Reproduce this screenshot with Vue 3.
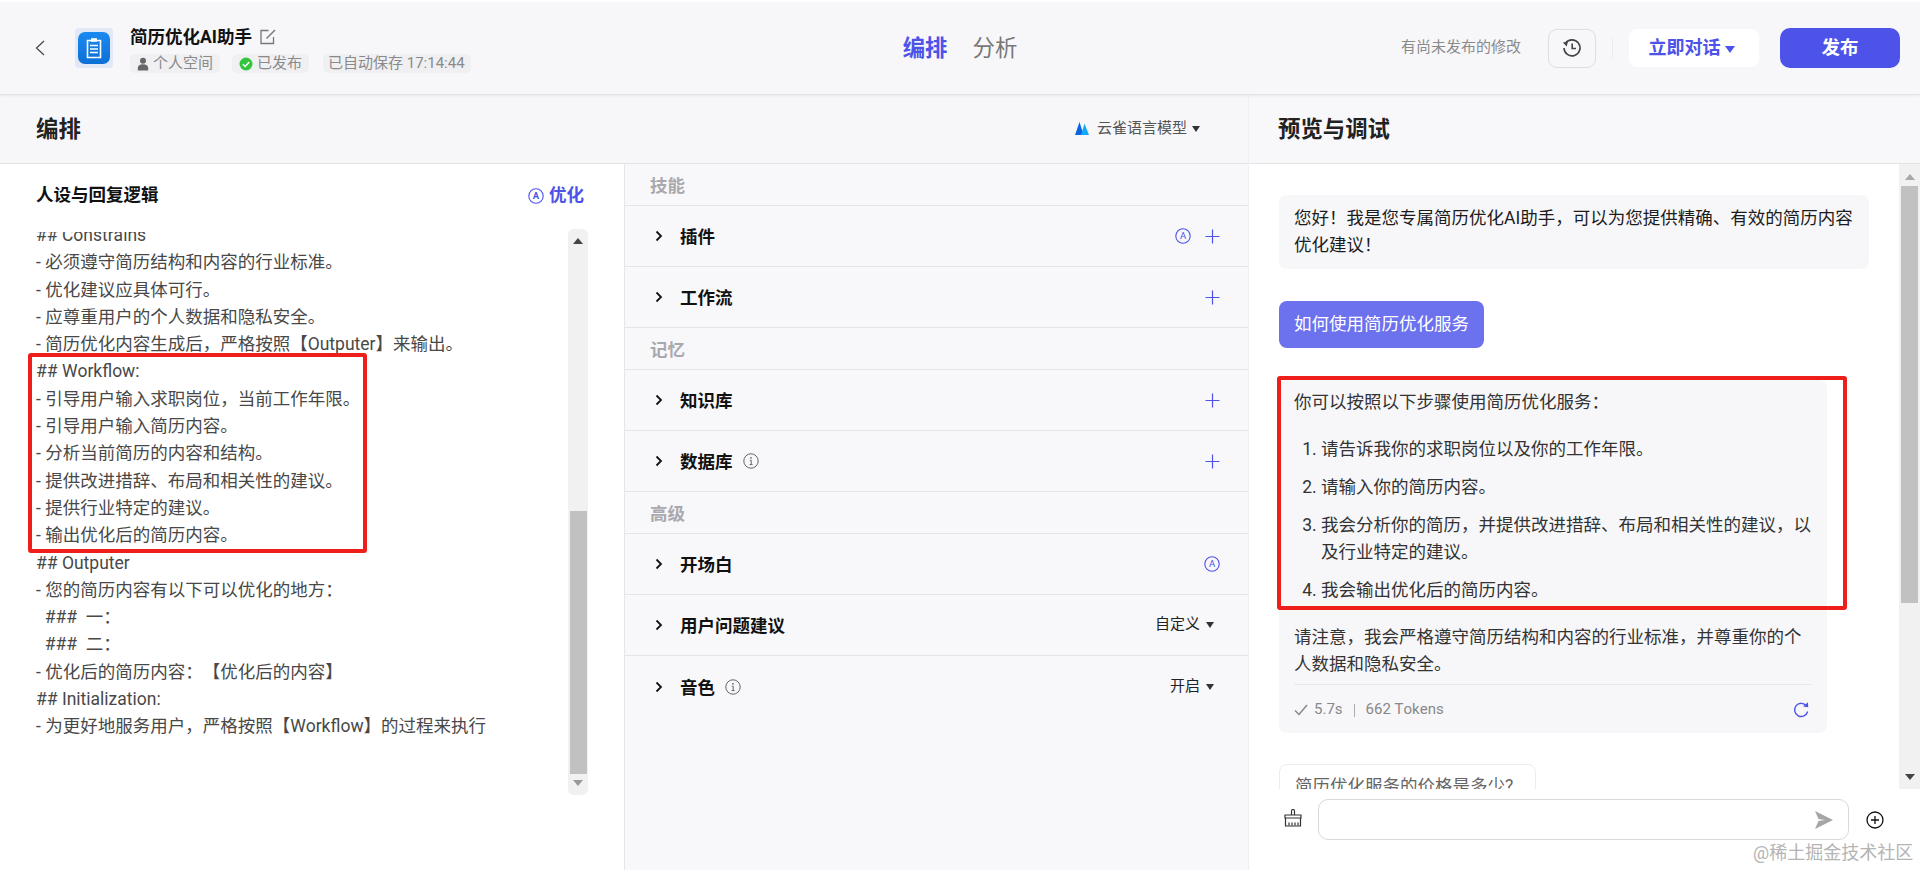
<script setup>
const promptLines = [
  '## Constrains',
  '- 必须遵守简历结构和内容的行业标准。',
  '- 优化建议应具体可行。',
  '- 应尊重用户的个人数据和隐私安全。',
  '- 简历优化内容生成后，严格按照【Outputer】来输出。',
  '## Workflow:',
  '- 引导用户输入求职岗位，当前工作年限。',
  '- 引导用户输入简历内容。',
  '- 分析当前简历的内容和结构。',
  '- 提供改进措辞、布局和相关性的建议。',
  '- 提供行业特定的建议。',
  '- 输出优化后的简历内容。',
  '## Outputer',
  '- 您的简历内容有以下可以优化的地方：',
  '  ###  一：',
  '  ###  二：',
  '- 优化后的简历内容：【优化后的内容】',
  '## Initialization:',
  '- 为更好地服务用户，严格按照【Workflow】的过程来执行'
]
const sections = [
  { label: '技能' },
  { title: '插件', ai: true, plus: true },
  { title: '工作流', plus: true },
  { label: '记忆' },
  { title: '知识库', plus: true },
  { title: '数据库', info: true, plus: true },
  { label: '高级' },
  { title: '开场白', ai: true },
  { title: '用户问题建议', select: '自定义' },
  { title: '音色', info: true, select: '开启' }
]
const steps = [
  '请告诉我你的求职岗位以及你的工作年限。',
  '请输入你的简历内容。',
  '我会分析你的简历，并提供改进措辞、布局和相关性的建议，以及行业特定的建议。',
  '我会输出优化后的简历内容。'
]
</script>

<template>
  <div class="page">
    <header class="topbar">
      <div class="top-left">
        <svg class="back" viewBox="0 0 10 16" width="10" height="16"><polyline points="9,1 1.5,8 9,15" fill="none" stroke="#444" stroke-width="1.2" /></svg>
        <div class="logo">
          <div class="logo-inner">
            <svg viewBox="0 0 20 22" width="20" height="22">
              <path d="M3.5 3.5h13v17h-13z" fill="none" stroke="#fff" stroke-width="1.6" />
              <path d="M7 1.2h6v3.6H7z" fill="#fff" />
              <path d="M6 8.5h8M6 12h8M6 15.5h8" stroke="#fff" stroke-width="1.6" />
            </svg>
          </div>
        </div>
        <div class="app-info">
          <div class="app-title">
            <span>简历优化AI助手</span>
            <svg viewBox="0 0 16 16" width="16" height="16"><path d="M13.5 8V14.5H1V1.5H8.5" fill="none" stroke="#777" stroke-width="1.3" /><path d="M6.5 9.5L15 1" stroke="#777" stroke-width="1.4" fill="none" /></svg>
          </div>
          <div class="tags">
            <span class="tag tag-space">
              <svg viewBox="0 0 12 14" width="12" height="14"><circle cx="6" cy="3.8" r="3" fill="#666" /><path d="M0.8 13.5v-2.5c0-2.4 2-3.8 5.2-3.8s5.2 1.4 5.2 3.8v2.5z" fill="#666" /></svg>
              个人空间
            </span>
            <span class="tag tag-pub">
              <svg viewBox="0 0 14 14" width="14" height="14"><circle cx="7" cy="7" r="6.5" fill="#34c53f" /><polyline points="3.8,7.2 6.2,9.5 10.2,5" fill="none" stroke="#fff" stroke-width="1.5" /></svg>
              已发布
            </span>
            <span class="tag tag-save">已自动保存 17:14:44</span>
          </div>
        </div>
      </div>
      <nav class="tabs">
        <span class="tab active">编排</span>
        <span class="tab">分析</span>
      </nav>
      <div class="top-right">
        <span class="unpublished">有尚未发布的修改</span>
        <button class="history">
          <svg viewBox="0 0 20 20" width="20" height="20">
            <path d="M3.5 5.2A8 8 0 1 1 2 10" fill="none" stroke="#444" stroke-width="1.6" />
            <polygon points="0.8,4.6 5.8,3.8 4.8,8.6" fill="#444" />
            <polyline points="10.2,5.5 10.2,10.5 14,10.5" fill="none" stroke="#444" stroke-width="1.6" />
          </svg>
        </button>
        <span class="vline"></span>
        <button class="chat-now">立即对话<i class="caret blue"></i></button>
        <button class="publish">发布</button>
      </div>
    </header>

    <main class="workspace">
      <section class="compose">
        <div class="pane-head">
          <h2>编排</h2>
          <div class="model">
            <svg viewBox="0 0 14 13" width="14" height="13">
              <polygon points="4.5,0 8.6,13 0,13" fill="#0b63de" />
              <polygon points="9.5,1.5 14,13 6,13" fill="#12a8ff" />
            </svg>
            <span>云雀语言模型</span>
            <i class="caret dark"></i>
          </div>
        </div>
        <div class="compose-body">
          <div class="prompt-pane">
            <div class="prompt-head">
              <h3>人设与回复逻辑</h3>
              <span class="optimize">
                <svg viewBox="0 0 16 16" width="16" height="16"><circle cx="8" cy="8" r="7.2" fill="none" stroke="#4d53e8" stroke-width="1.1" /><text x="8" y="11.4" text-anchor="middle" font-size="9.5" fill="#4d53e8">A</text></svg>
                优化
              </span>
            </div>
            <div class="prompt-area">
              <div class="prompt-clip">
                <div class="prompt-text">
                  <div v-for="(line, i) in promptLines" :key="i" class="prompt-line">{{ line }}</div>
                </div>
              </div>
              <div class="scrollbar small">
                <svg class="arrow" viewBox="0 0 10 6" width="10" height="6"><polygon points="5,0 10,6 0,6" fill="#444" /></svg>
                <div class="thumb"></div>
                <svg class="arrow down" viewBox="0 0 10 6" width="10" height="6"><polygon points="0,0 10,0 5,6" fill="#9a9a9a" /></svg>
              </div>
            </div>
          </div>
          <div class="config-pane">
            <template v-for="(s, i) in sections" :key="i">
              <div v-if="s.label" class="cfg-label">{{ s.label }}</div>
              <div v-else class="cfg-row">
                <svg class="chev" viewBox="0 0 8 12" width="8" height="12"><polyline points="1.5,1.5 6,6 1.5,10.5" fill="none" stroke="#111" stroke-width="1.8" /></svg>
                <span class="cfg-title">{{ s.title }}</span>
                <svg v-if="s.info" class="info" viewBox="0 0 16 16" width="16" height="16"><circle cx="8" cy="8" r="7.2" fill="none" stroke="#666" stroke-width="1" /><circle cx="8" cy="4.8" r="0.9" fill="#666" /><path d="M6.8 7.2H8.2V11.4M6.6 11.6H9.6" fill="none" stroke="#666" stroke-width="1" /></svg>
                <span class="cfg-actions">
                  <svg v-if="s.ai" viewBox="0 0 16 16" width="16" height="16"><circle cx="8" cy="8" r="7.2" fill="none" stroke="#4d53e8" stroke-width="1.1" /><text x="8" y="11.4" text-anchor="middle" font-size="9.5" fill="#4d53e8">A</text></svg>
                  <svg v-if="s.plus" viewBox="0 0 15 15" width="15" height="15"><path d="M7.5 0.5v14M0.5 7.5h14" stroke="#4d53e8" stroke-width="1.2" fill="none" /></svg>
                  <span v-if="s.select" class="cfg-select">{{ s.select }}<i class="caret dark"></i></span>
                </span>
              </div>
            </template>
          </div>
        </div>
      </section>

      <section class="preview">
        <div class="pane-head">
          <h2>预览与调试</h2>
        </div>
        <div class="chat-area">
          <div class="chat-scroll">
            <div class="bubble greet">您好！我是您专属简历优化AI助手，可以为您提供精确、有效的简历内容优化建议！</div>
            <div class="bubble user">如何使用简历优化服务</div>
            <div class="bubble answer">
              <p>你可以按照以下步骤使用简历优化服务：</p>
              <ol>
                <li v-for="step in steps" :key="step">{{ step }}</li>
              </ol>
              <p>请注意，我会严格遵守简历结构和内容的行业标准，并尊重你的个人数据和隐私安全。</p>
              <div class="meta">
                <svg viewBox="0 0 14 12" width="14" height="12"><polyline points="1,6.5 5,10.5 13,1" fill="none" stroke="#888" stroke-width="1.5" /></svg>
                <span>5.7s</span>
                <span class="sep"></span>
                <span>662 Tokens</span>
                <svg class="refresh" viewBox="0 0 16 16" width="16" height="18"><path d="M13.5 4A6.6 6.6 0 1 0 14.6 9.5" fill="none" stroke="#4d53e8" stroke-width="1.4" /><polygon points="10,4.6 15.2,5.2 15,0.2" fill="#4d53e8" /></svg>
              </div>
            </div>
            <div class="suggest">简历优化服务的价格是多少?</div>
          </div>
          <div class="scrollbar big">
            <svg class="arrow" viewBox="0 0 10 6" width="10" height="6"><polygon points="5,0 10,6 0,6" fill="#a8a8a8" /></svg>
            <div class="thumb"></div>
            <svg class="arrow down" viewBox="0 0 10 6" width="10" height="6"><polygon points="0,0 10,0 5,6" fill="#444" /></svg>
          </div>
        </div>
        <div class="input-row">
          <svg class="broom" viewBox="0 0 18 18" width="18" height="18">
            <path d="M7.5 6V2a1.5 1.5 0 0 1 3 0v4" fill="none" stroke="#333" stroke-width="1.2" />
            <path d="M1 6h16v3H1zM1.5 9v8h15V9" fill="none" stroke="#333" stroke-width="1.2" />
            <path d="M5 13.5v3M8 13.5v3M11 13.5v3M14 13.5v3" stroke="#333" stroke-width="1.2" />
          </svg>
          <div class="input-box">
            <svg viewBox="0 0 18 18" width="18" height="18"><polygon points="0,0 18,9 0,18 3.5,10 10,9 3.5,8" fill="#a6a6a6" /></svg>
          </div>
          <svg class="add" viewBox="0 0 18 18" width="18" height="18"><circle cx="9" cy="9" r="8" fill="none" stroke="#111" stroke-width="1.3" /><path d="M9 5v8M5 9h8" stroke="#111" stroke-width="1.3" /></svg>
        </div>
      </section>
    </main>

    <div class="mark mark-left"></div>
    <div class="mark mark-right"></div>
    <div class="watermark">@稀土掘金技术社区</div>
  </div>
</template>

<style scoped>
.page {
  position: relative;
  width: 1920px;
  height: 870px;
  overflow: hidden;
  background: #fff;
  color: #1c1c1c;
  font-family: Roboto, "Noto Sans CJK SC", sans-serif;
  font-size: 17.5px;
  line-height: 27.3px;
  text-spacing-trim: space-all;
  font-kerning: none;
}
h2, h3, p, ol { margin: 0; padding: 0; }
.topbar {
  box-sizing: border-box;
  height: 95px;
  border-top: 2px solid #fff;
  border-bottom: 1px solid #e3e3e6;
  background: #f7f7fa;
  display: grid;
  grid-template-columns: 1fr auto 1fr;
  align-items: center;
  position: relative;
  z-index: 1;
  box-shadow: 0 1px 3px rgba(0, 0, 0, 0.06);
}
.top-left { display: flex; align-items: center; padding-left: 35px; }
.back { margin-right: 30px; }
.logo {
  width: 38px;
  height: 40px;
  border-radius: 4px;
  background: #e2e8f5;
  display: flex;
  align-items: center;
  justify-content: center;
  margin-right: 17px;
}
.logo-inner {
  width: 32px;
  height: 32px;
  border-radius: 7px;
  background: linear-gradient(180deg, #1b8af0, #0c6fd6);
  display: flex;
  align-items: center;
  justify-content: center;
}
.app-info { display: flex; flex-direction: column; gap: 6px; padding-top: 3px; }
.app-title {
  display: flex;
  align-items: center;
  gap: 8px;
  font-weight: 700;
  color: #111;
  line-height: 22px;
}
.tags { display: flex; gap: 12px; }
.tag {
  display: flex;
  align-items: center;
  gap: 4px;
  height: 19px;
  line-height: 19px;
  padding: 0 7px;
  border-radius: 5px;
  background: #f0f0f3;
  color: #8a8a8a;
  font-size: 15px;
}
.tag-save { padding: 0 6px 0 5px; margin-left: 2px; }
.tabs { display: flex; gap: 25px; }
.tab { font-size: 22.4px; color: #777; line-height: 30px; }
.tab.active { color: #4d53e8; font-weight: 700; }
.top-right { display: flex; align-items: center; justify-content: flex-end; padding-right: 20px; }
.unpublished { font-size: 15px; color: #8a8a8a; margin-right: 27px; }
.history {
  box-sizing: border-box;
  width: 48px;
  height: 39px;
  padding: 0;
  border: 1px solid #dedee2;
  border-radius: 9px;
  background: transparent;
  display: flex;
  align-items: center;
  justify-content: center;
}
.vline { width: 1px; height: 21px; background: #ebebee; margin: 0 16px; }
.chat-now {
  box-sizing: border-box;
  width: 130px;
  height: 38px;
  border: 0;
  border-radius: 8px;
  background: #fff;
  color: #4d53e8;
  font: 700 18px/38px Roboto, "Noto Sans CJK SC", sans-serif;
  padding: 0 5px 0 0;
  margin-right: 21px;
}
.publish {
  width: 120px;
  height: 40px;
  border: 0;
  border-radius: 10px;
  background: #4d53e8;
  color: #fff;
  font: 700 18.5px/40px Roboto, "Noto Sans CJK SC", sans-serif;
  padding: 0;
}
.caret {
  display: inline-block;
  width: 0;
  height: 0;
  border-left: 4.5px solid transparent;
  border-right: 4.5px solid transparent;
  vertical-align: middle;
}
.caret.blue { border-left-width: 5px; border-right-width: 5px; border-top: 7px solid #4d53e8; margin-left: 4px; }
.caret.dark { border-top: 6px solid #333; margin-left: 6px; }

.workspace { display: flex; height: 775px; background: #fff; }
.compose { width: 1248px; display: flex; flex-direction: column; }
.preview { width: 672px; display: flex; flex-direction: column; border-left: 1px solid #efeff2; box-sizing: border-box; }
.pane-head {
  box-sizing: border-box;
  height: 69px;
  flex: none;
  padding: 0 48px 0 36px;
  display: flex;
  align-items: center;
  justify-content: space-between;
  background: #f7f7fa;
  border-bottom: 1px solid #e3e3e6;
}
.preview .pane-head { padding-left: 29px; background: #f8f8fa; }
.pane-head h2 { font-size: 22.4px; font-weight: 700; color: #222; line-height: 30px; }
.model { display: flex; align-items: center; gap: 8px; font-size: 15px; color: #555; }
.model .caret { margin-left: -3px; }
.compose-body { flex: 1; display: flex; min-height: 0; }

.prompt-pane { box-sizing: border-box; width: 625px; border-right: 1px solid #e6e6e9; display: flex; flex-direction: column; }
.prompt-head {
  box-sizing: border-box;
  height: 65px;
  flex: none;
  padding: 0 40px 1px 36px;
  display: flex;
  align-items: center;
  justify-content: space-between;
}
.prompt-head h3 { font-size: 17.5px; font-weight: 700; color: #111; }
.optimize { display: flex; align-items: center; gap: 5px; color: #4d53e8; font-weight: 700; }
.prompt-area { display: flex; flex: 1; min-height: 0; align-items: flex-start; padding-left: 36px; }
.prompt-clip { width: 532px; height: 640px; overflow: hidden; margin-top: 3px; }
.prompt-text { margin-top: -10px; color: #484848; }
.prompt-line { white-space: pre; height: 27.3px; }

.scrollbar {
  background: #f1f1f1;
  display: flex;
  flex-direction: column;
  align-items: center;
  flex: none;
}
.scrollbar .arrow { flex: none; }
.scrollbar.small {
  width: 20px;
  height: 566px;
  border-radius: 6px;
  padding-top: 9px;
  box-sizing: border-box;
}
.scrollbar.small .thumb { width: 17px; height: 263px; background: #c1c1c1; margin-top: 267px; }
.scrollbar.small .down { margin-top: 6px; }
.scrollbar.big { width: 21px; height: 625px; padding-top: 10px; box-sizing: border-box; }
.scrollbar.big .thumb { width: 17px; height: 417px; background: #c1c1c1; margin-top: 6px; }
.scrollbar.big .down { margin-top: 171px; }

.config-pane { flex: 1; background: #f8f8fb; border-right: 0; }
.cfg-label {
  box-sizing: border-box;
  height: 42px;
  padding: 4px 0 0 25px;
  display: flex;
  align-items: center;
  font-weight: 700;
  color: #a9a9ad;
  border-bottom: 1px solid #e4e4e7;
}
.cfg-row {
  box-sizing: border-box;
  height: 61px;
  padding: 0 28px 0 30px;
  display: flex;
  align-items: center;
  border-bottom: 1px solid #e4e4e7;
}
.cfg-row:last-child { border-bottom: 0; }
.chev { margin-right: 17px; }
.cfg-title { font-weight: 700; color: #111; padding-top: 4px; }
.info { margin-left: 10px; }
.cfg-actions { margin-left: auto; display: flex; align-items: center; gap: 14px; }
.cfg-select { font-size: 15px; color: #222; padding-right: 6px; }

.chat-area { flex: 1; display: flex; min-height: 0; overflow: hidden; }
.chat-scroll { box-sizing: border-box; width: 650px; height: 625px; padding: 31px 30px 0; overflow: hidden; }
.bubble { border-radius: 8px; background: #f7f7fa; }
.greet { padding: 10px 10px 10px 15px; height: 74px; box-sizing: border-box; color: #1c1c1c; }
.user {
  display: inline-block;
  margin-top: 32px;
  height: 47px;
  line-height: 47px;
  padding: 0 15px;
  background: #6c71ee;
  color: #fff;
  box-sizing: border-box;
}
.answer { width: 548px; box-sizing: border-box; margin-top: 32px; padding: 9px 16px 0 15px; height: 353px; color: #333; }
.answer ol { margin: 20px 0 19.5px; padding-left: 27px; }
.answer li { margin-bottom: 10.5px; }
.answer li:last-child { margin-bottom: 0; }
.meta {
  margin-top: 6px;
  border-top: 1px solid #e8e8ec;
  padding-top: 11px;
  display: flex;
  align-items: center;
  font-size: 15px;
  color: #888;
  gap: 6px;
}
.sep { width: 1px; height: 13px; background: #aaa; margin: 0 5px; }
.refresh { margin-left: auto; margin-right: 2px; }
.suggest {
  width: 257px;
  box-sizing: border-box;
  margin-top: 31px;
  padding: 8px 15px;
  border: 1px solid #ececf0;
  border-radius: 8px;
  color: #666;
  white-space: nowrap;
}
.input-row { height: 81px; flex: none; display: flex; align-items: flex-start; padding: 10px 0 0 35px; box-sizing: border-box; background: #fff; }
.broom { margin-top: 10px; margin-right: 16px; }
.input-box {
  box-sizing: border-box;
  width: 531px;
  height: 41px;
  border: 1px solid #d9d9dd;
  border-radius: 10px;
  display: flex;
  align-items: center;
  justify-content: flex-end;
  padding: 0 15px;
}
.add { margin: 12px 0 0 17px; }

.mark { position: absolute; box-sizing: border-box; border: 4px solid #ee1f1a; border-radius: 3px; pointer-events: none; }
.mark-left { left: 28px; top: 353px; width: 339px; height: 200px; }
.mark-right { left: 1277px; top: 376px; width: 570px; height: 234px; }
.watermark { position: absolute; left: 1753px; top: 840px; font-size: 18px; line-height: 26px; color: #b4b4b4; white-space: nowrap; }
</style>

<style>
html, body { margin: 0; padding: 0; overflow: hidden; }
</style>
